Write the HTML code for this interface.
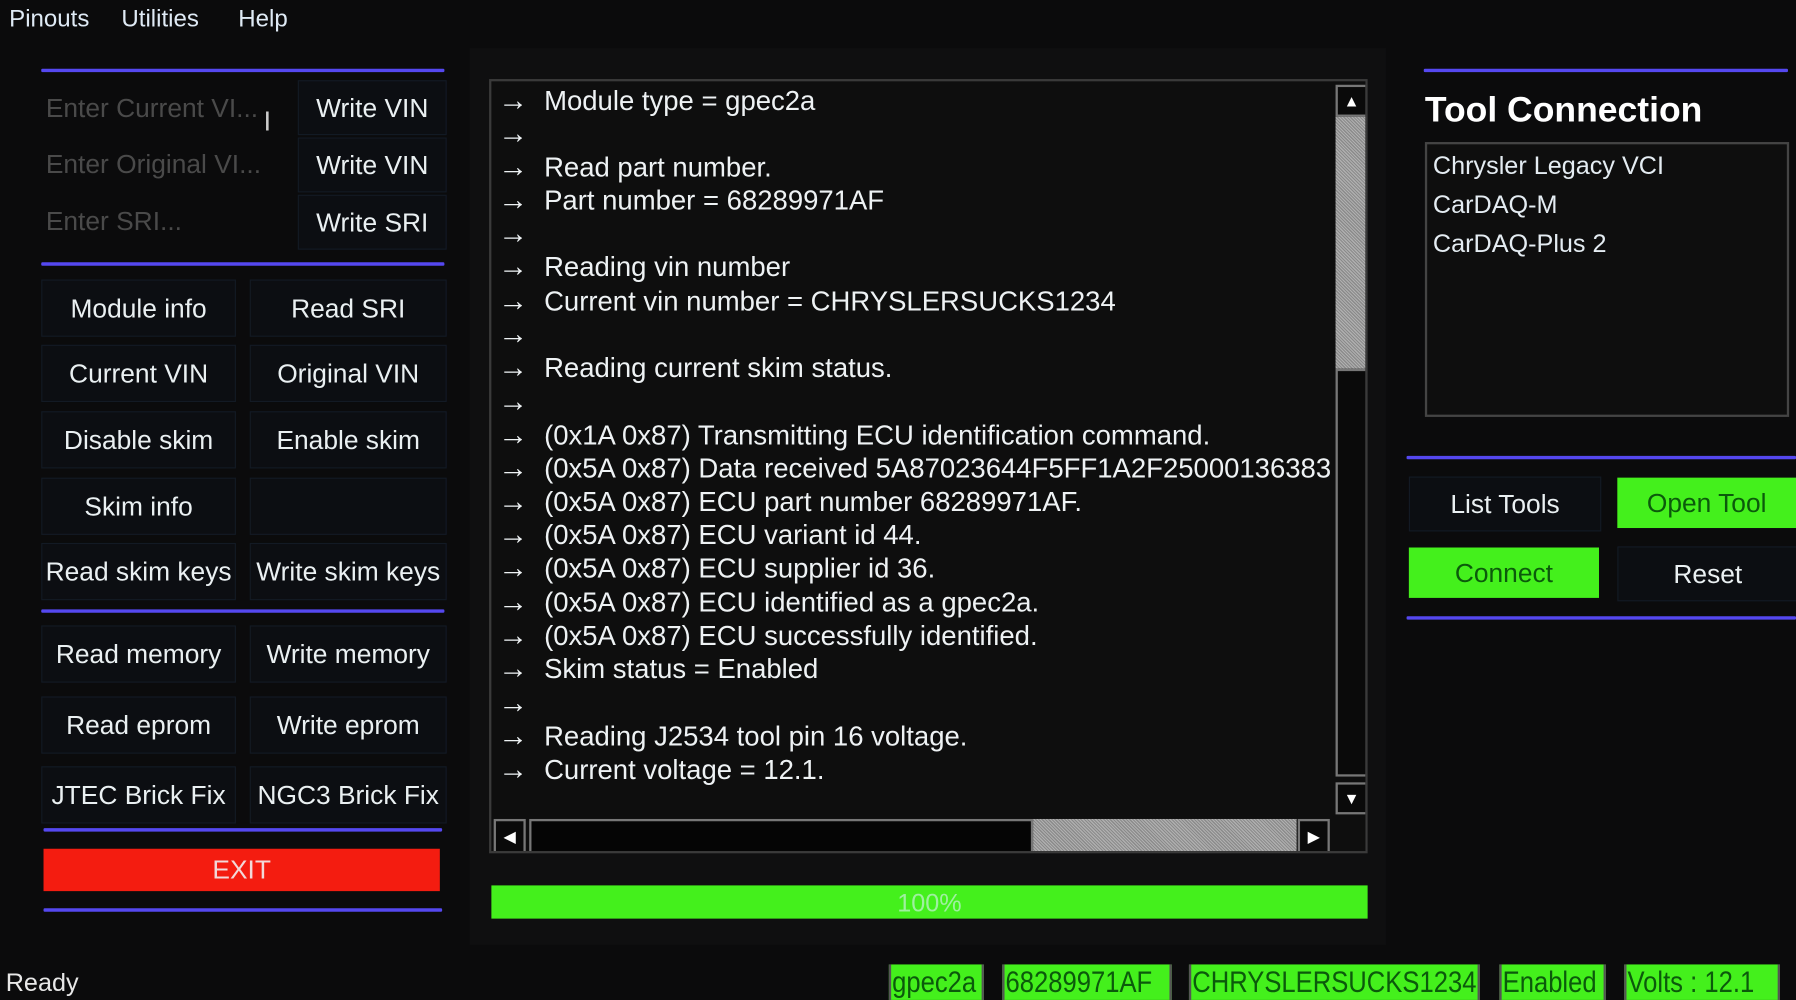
<!DOCTYPE html>
<html><head><meta charset="utf-8"><style>
html,body{margin:0;padding:0;background:#0b0b0c;overflow:hidden;width:1796px;height:1000px}
#w{position:absolute;left:0;top:0;width:1568px;height:873px;transform:scale(1.14541);transform-origin:0 0;font-family:"Liberation Sans",sans-serif;color:#eef2f4}
.a{position:absolute}
.bl{position:absolute;height:3px;background:#5548f0;border-radius:1px}
.b{position:absolute;background:#0c0e12;border:1px solid #131a24;display:flex;align-items:center;justify-content:center;overflow:hidden;white-space:nowrap;font-size:23px;color:#eaf0f2}
.ph{position:absolute;font-size:23px;color:#4a4a4a;white-space:nowrap}
.g{background:#44f01c;color:#0b5a0b;border:none}
.log{position:absolute;left:427px;top:69px;width:767px;height:676px;background:#0e0e0e;border:2px solid #3a3a3a;box-sizing:border-box;overflow:hidden}
.ln{position:absolute;left:6px;font-size:24px;white-space:nowrap;height:29px;line-height:29px}
.ln span{display:inline-block;width:40px;font-size:26px}
.hat{background:repeating-linear-gradient(45deg,#8a8a8a 0 1px,#b0b0b0 1px 2px)}
.sb{position:absolute;background:#0a0a0a;border:2px solid #777;box-sizing:border-box;display:flex;align-items:center;justify-content:center;color:#fff;font-size:14px}
.st{position:absolute;top:842px;height:31px;background:#44f01c;color:#0b5a0b;font-size:26px;line-height:31px;overflow:hidden;white-space:nowrap;border-left:2px solid #555;border-right:2px solid #555;box-sizing:border-box}
.st span{display:inline-block;transform:scaleX(.86);transform-origin:0 50%;padding-left:1px}
</style></head><body><div id="w">
<div class="a" style="left:8px;top:5px;font-size:21px;color:#dfeaf5">Pinouts</div>
<div class="a" style="left:106px;top:5px;font-size:21px;color:#dfeaf5">Utilities</div>
<div class="a" style="left:208px;top:5px;font-size:21px;color:#dfeaf5">Help</div>

<div class="a" style="left:410px;top:42px;width:800px;height:783px;background:#0f0f10"></div>

<div class="bl" style="left:36px;top:60px;width:352px"></div>
<div class="ph" style="left:40px;top:81px">Enter Current VI...</div>
<div class="a" style="left:230px;top:93px;font-size:24px;color:#ccc">I</div>
<div class="ph" style="left:40px;top:130px">Enter Original VI...</div>
<div class="ph" style="left:40px;top:180px">Enter SRI...</div>
<div class="b" style="left:260px;top:70px;width:128px;height:46px">Write VIN</div>
<div class="b" style="left:260px;top:120px;width:128px;height:46px">Write VIN</div>
<div class="b" style="left:260px;top:170px;width:128px;height:46px">Write SRI</div>
<div class="bl" style="left:36px;top:229px;width:352px"></div>

<div class="b" style="left:36px;top:244px;width:168px;height:48px">Module info</div>
<div class="b" style="left:218px;top:244px;width:170px;height:48px">Read SRI</div>
<div class="b" style="left:36px;top:301px;width:168px;height:48px">Current VIN</div>
<div class="b" style="left:218px;top:301px;width:170px;height:48px">Original VIN</div>
<div class="b" style="left:36px;top:359px;width:168px;height:48px">Disable skim</div>
<div class="b" style="left:218px;top:359px;width:170px;height:48px">Enable skim</div>
<div class="b" style="left:36px;top:417px;width:168px;height:48px">Skim info</div>
<div class="b" style="left:218px;top:417px;width:170px;height:48px"></div>
<div class="b" style="left:36px;top:474px;width:168px;height:48px">Read skim keys</div>
<div class="b" style="left:218px;top:474px;width:170px;height:48px">Write skim keys</div>
<div class="bl" style="left:36px;top:532px;width:352px"></div>
<div class="b" style="left:36px;top:546px;width:168px;height:48px">Read memory</div>
<div class="b" style="left:218px;top:546px;width:170px;height:48px">Write memory</div>
<div class="b" style="left:36px;top:608px;width:168px;height:48px">Read eprom</div>
<div class="b" style="left:218px;top:608px;width:170px;height:48px">Write eprom</div>
<div class="b" style="left:36px;top:669px;width:168px;height:48px">JTEC Brick Fix</div>
<div class="b" style="left:218px;top:669px;width:170px;height:48px">NGC3 Brick Fix</div>
<div class="bl" style="left:38px;top:723px;width:348px"></div>
<div class="b" style="left:38px;top:741px;width:346px;height:37px;background:#f41c10;border:none;color:#f2d8d8">EXIT</div>
<div class="bl" style="left:38px;top:793px;width:348px"></div>

<div class="log">
<div class="ln" style="top:2px"><span>→</span>Module type = gpec2a</div>
<div class="ln" style="top:31px"><span>→</span></div>
<div class="ln" style="top:60px"><span>→</span>Read part number.</div>
<div class="ln" style="top:89px"><span>→</span>Part number = 68289971AF</div>
<div class="ln" style="top:118px"><span>→</span></div>
<div class="ln" style="top:147px"><span>→</span>Reading vin number</div>
<div class="ln" style="top:177px"><span>→</span>Current vin number = CHRYSLERSUCKS1234</div>
<div class="ln" style="top:206px"><span>→</span></div>
<div class="ln" style="top:235px"><span>→</span>Reading current skim status.</div>
<div class="ln" style="top:265px"><span>→</span></div>
<div class="ln" style="top:294px"><span>→</span>(0x1A 0x87) Transmitting ECU identification command.</div>
<div class="ln" style="top:323px"><span>→</span>(0x5A 0x87) Data received 5A87023644F5FF1A2F25000136383</div>
<div class="ln" style="top:352px"><span>→</span>(0x5A 0x87) ECU part number 68289971AF.</div>
<div class="ln" style="top:381px"><span>→</span>(0x5A 0x87) ECU variant id 44.</div>
<div class="ln" style="top:410px"><span>→</span>(0x5A 0x87) ECU supplier id 36.</div>
<div class="ln" style="top:440px"><span>→</span>(0x5A 0x87) ECU identified as a gpec2a.</div>
<div class="ln" style="top:469px"><span>→</span>(0x5A 0x87) ECU successfully identified.</div>
<div class="ln" style="top:498px"><span>→</span>Skim status = Enabled</div>
<div class="ln" style="top:528px"><span>→</span></div>
<div class="ln" style="top:557px"><span>→</span>Reading J2534 tool pin 16 voltage.</div>
<div class="ln" style="top:586px"><span>→</span>Current voltage = 12.1.</div>
<div class="a" style="left:735px;top:0;width:30px;height:674px;background:#0e0e0e"></div>
<div class="sb" style="left:737px;top:3px;width:28px;height:28px">▲</div>
<div class="a hat" style="left:737px;top:31px;width:28px;height:220px"></div>
<div class="sb" style="left:737px;top:251px;width:28px;height:356px"></div>
<div class="sb" style="left:737px;top:612px;width:28px;height:28px">▼</div>
<div class="a" style="left:0;top:642px;width:735px;height:34px;background:#0e0e0e"></div>
<div class="sb" style="left:2px;top:644px;width:28px;height:30px">◀</div>
<div class="sb" style="left:33px;top:644px;width:440px;height:30px;background:#050505"></div>
<div class="a hat" style="left:473px;top:644px;width:230px;height:30px"></div>
<div class="sb" style="left:704px;top:644px;width:28px;height:30px">▶</div>
</div>

<div class="a" style="left:429px;top:773px;width:765px;height:29px;background:#44f01c;color:#9ff0a0;font-size:22px;line-height:31px;text-align:center">100%</div>

<div class="bl" style="left:1243px;top:60px;width:318px"></div>
<div class="a" style="left:1244px;top:78px;font-size:31px;font-weight:bold;color:#fff">Tool Connection</div>
<div class="a" style="left:1244px;top:124px;width:318px;height:240px;border:2px solid #444;box-sizing:border-box;background:#0e0e0e"></div>
<div class="a" style="left:1251px;top:128px;font-size:22px;line-height:34px;color:#e4ecf2">Chrysler Legacy VCI<br>CarDAQ-M<br>CarDAQ-Plus 2</div>
<div class="bl" style="left:1228px;top:398px;width:340px"></div>
<div class="b" style="left:1230px;top:416px;width:166px;height:46px">List Tools</div>
<div class="b g" style="left:1412px;top:417px;width:156px;height:44px">Open Tool</div>
<div class="b g" style="left:1230px;top:478px;width:166px;height:44px">Connect</div>
<div class="b" style="left:1412px;top:477px;width:156px;height:46px">Reset</div>
<div class="bl" style="left:1228px;top:538px;width:340px"></div>

<div class="a" style="left:5px;top:845px;font-size:22px;color:#e8e8e8">Ready</div>
<div class="st" style="left:776px;width:83px"><span>gpec2a</span></div>
<div class="st" style="left:875px;width:148px"><span>68289971AF</span></div>
<div class="st" style="left:1038px;width:254px"><span>CHRYSLERSUCKS1234</span></div>
<div class="st" style="left:1309px;width:93px"><span>Enabled</span></div>
<div class="st" style="left:1418px;width:136px"><span>Volts : 12.1</span></div>
</div></body></html>
